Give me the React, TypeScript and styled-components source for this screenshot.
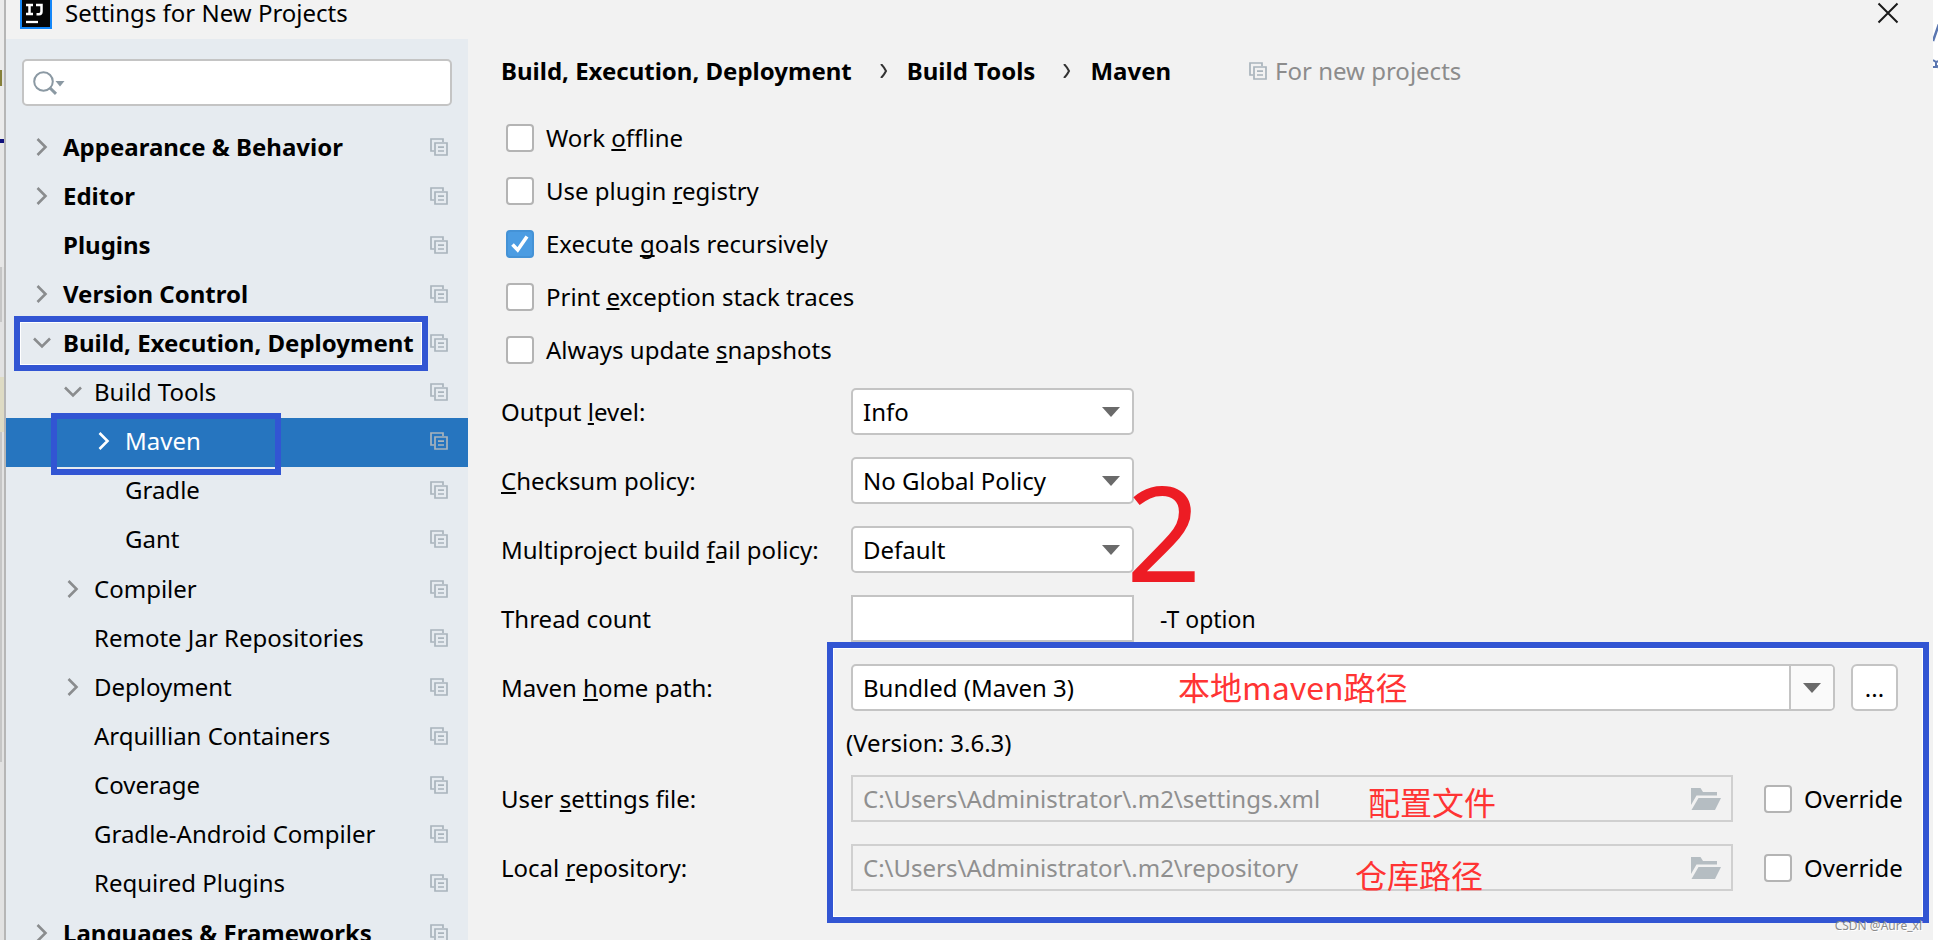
import React, { ReactNode } from "react";
import styled, { createGlobalStyle, css } from "styled-components";

const SANS = `"Noto Sans", "Open Sans", "Noto Sans CJK SC", sans-serif`;
const CJK = `"Noto Sans CJK SC", "Noto Sans", sans-serif`;
const LINE = "#c4c4c4";
const MARK_BLUE = "#3255d3";
const MARK_RED = "#ff3434";

const GlobalStyle = createGlobalStyle`
  *, *::before, *::after { box-sizing: border-box; }
  body {
    margin: 0;
    overflow: hidden;
    background: #f2f2f2;
    color: #000;
    font-family: ${SANS};
    font-size: 24px;
    line-height: 32px;
  }
  button, input, select { font: inherit; color: inherit; margin: 0; }
  svg { display: block; flex: none; }
`;

/* ---------- shell ---------- */

const Page = styled.div`
  display: flex;
  height: 100vh;
  overflow: hidden;
`;

const LeftEdge = styled.div`
  display: flex;
  flex-direction: column;
  width: 6px;
  flex: none;
  border-right: 2px solid #b6b6b6;
  background: #e2e2e2;
`;

const EdgePart = styled.div<{ $h: number; $w?: number; $color: string }>`
  width: ${(p) => p.$w ?? 4}px;
  height: ${(p) => p.$h}px;
  flex: none;
  background: ${(p) => p.$color};
`;

const RightEdge = styled.div`
  width: 5px;
  flex: none;
  padding-top: 24px;
  background: #fff;
  overflow: hidden;
`;

const Dialog = styled.div`
  flex: 1;
  min-width: 0;
  display: flex;
  flex-direction: column;
`;

const TitleBar = styled.header`
  display: flex;
  align-items: center;
  flex: none;
  height: 39px;
  padding: 0 34px 14px 14px;
`;

const Title = styled.h1`
  flex: 1;
  margin: 0 0 0 13px;
  font-size: 24px;
  font-weight: 400;
  line-height: 24px;
`;

const CloseButton = styled.button`
  padding: 0;
  border: 0;
  background: none;
`;

const Body = styled.div`
  flex: 1;
  min-height: 0;
  display: flex;
`;

/* ---------- sidebar ---------- */

const Sidebar = styled.aside`
  width: 462px;
  flex: none;
  padding-top: 20px;
  background: #e6ebf0;
`;

const SearchBox = styled.label`
  display: flex;
  align-items: center;
  gap: 6px;
  height: 47px;
  margin: 0 16px 18px;
  padding: 0 9px;
  border: 2px solid ${LINE};
  border-radius: 5px;
  background: #fff;
`;

const SearchInput = styled.input`
  flex: 1;
  min-width: 0;
  border: 0;
  outline: 0;
  background: none;
`;

const TreeList = styled.ul`
  margin: 0;
  padding: 0;
  list-style: none;
`;

const SubList = styled(TreeList)`
  padding-bottom: 1px;
`;

const TreeItem = styled.li`
  position: relative;
`;

const TreeRow = styled.button<{ $level: number; $selected?: boolean }>`
  display: flex;
  align-items: center;
  width: 100%;
  height: 49px;
  padding: 0 20px 4px ${(p) => 24 + p.$level * 31}px;
  border: 0;
  background: ${(p) => (p.$selected ? "#2675bf" : "none")};
  color: ${(p) => (p.$selected ? "#fff" : "#000")};
  font-weight: ${(p) => (p.$level ? 400 : 700)};
  text-align: left;
  white-space: nowrap;
`;

const ChevronSlot = styled.span`
  display: flex;
  justify-content: center;
  width: 24px;
  margin-right: 9px;
`;

const TreeLabel = styled.span`
  flex: 1;
`;

/* ---------- annotation marks drawn over the dialog ---------- */

const MarkBox = styled.div<{ $top: number; $left: number; $width?: number; $right?: number; $height: number; $halo?: boolean }>`
  position: absolute;
  z-index: 1;
  top: ${(p) => p.$top}px;
  left: ${(p) => p.$left}px;
  ${(p) => (p.$width ? css`width: ${p.$width}px;` : css`right: ${p.$right}px;`)}
  height: ${(p) => p.$height}px;
  border: 6px solid ${MARK_BLUE};
  box-shadow: ${(p) => (p.$halo ? "inset 0 0 0 1px #fff" : "none")};
  pointer-events: none;
`;

const MarkText = styled.span<{ $left: number; $top: number }>`
  position: absolute;
  left: ${(p) => p.$left}px;
  top: ${(p) => p.$top}px;
  color: ${MARK_RED};
  font-family: ${CJK};
  font-size: 32px;
  line-height: 40px;
  white-space: nowrap;
  pointer-events: none;
`;

const MarkNumber = styled.span`
  position: absolute;
  left: 625px;
  top: 77px;
  color: #ed1c24;
  font-size: 132px;
  line-height: 132px;
  pointer-events: none;
`;

const Watermark = styled.div`
  position: absolute;
  right: 11px;
  bottom: 4px;
  z-index: 2;
  color: #8a8a8a;
  font-size: 12px;
  line-height: 20px;
  text-shadow: 1px 1px 0 #fff;
`;

/* ---------- settings panel ---------- */

const Main = styled.main`
  position: relative;
  flex: 1;
  min-width: 0;
  padding-left: 33px;
`;

const Breadcrumb = styled.nav`
  display: flex;
  align-items: center;
  height: 64px;
  white-space: nowrap;
`;

const Crumb = styled.a`
  color: #000;
  font-weight: 700;
  text-decoration: none;
`;

const CrumbArrow = styled.span`
  padding: 0 19px 0 28px;
`;

const Scope = styled.span`
  display: flex;
  align-items: center;
  gap: 8px;
  margin-left: 78px;
  color: #8c8c8c;
`;

const CheckList = styled.div`
  display: flex;
  flex-direction: column;
  padding: 8px 0 12px 5px;
`;

const CheckLabel = styled.label<{ $row: number }>`
  display: flex;
  align-items: center;
  gap: 12px;
  height: ${(p) => p.$row}px;
  white-space: nowrap;
`;

const CheckFrame = styled.span`
  display: grid;
  place-items: center;
  & > * { grid-area: 1 / 1; }
`;

const CheckInput = styled.input`
  appearance: none;
  width: 28px;
  height: 28px;
  border: 2px solid #b4b4b4;
  border-radius: 4px;
  background: #fff;
  &:checked { background: #4b9ce2; border-color: #4492d6; }
`;

const Mnemonic = styled.u`
  text-decoration-thickness: 2px;
  text-underline-offset: 2px;
  text-decoration-skip-ink: none;
`;

const Form = styled.form`
  position: relative;
  display: flex;
  flex-direction: column;
  gap: 22px;
  padding-right: 23px;
`;

const FieldRow = styled.div`
  display: flex;
  align-items: center;
  height: 47px;
`;

const FieldLabel = styled.label`
  width: 350px;
  flex: none;
  white-space: nowrap;
`;

const PathRows = styled.div`
  display: flex;
  flex-direction: column;
`;

const Version = styled.div`
  display: flex;
  align-items: center;
  height: 64px;
  padding-left: 345px;
`;

const SelectFrame = styled.span`
  position: relative;
  width: 283px;
`;

const Select = styled.select`
  appearance: none;
  display: block;
  width: 100%;
  height: 47px;
  padding: 0 40px 0 10px;
  border: 2px solid ${LINE};
  border-radius: 5px;
  background: #fff;
`;

const SelectArrow = styled.span`
  position: absolute;
  top: 19px;
  right: 14px;
  pointer-events: none;
`;

const CountInput = styled.input`
  width: 283px;
  height: 47px;
  padding: 0 10px;
  border: 2px solid ${LINE};
  background: #fff;
`;

const Hint = styled.span`
  margin-left: 26px;
  font-size: 23px;
`;

const PathField = styled.div<{ $disabled?: boolean }>`
  position: relative;
  display: flex;
  align-items: center;
  flex: 1;
  min-width: 0;
  height: 47px;
  border: 2px solid ${(p) => (p.$disabled ? "#d0d0d0" : LINE)};
  border-radius: ${(p) => (p.$disabled ? 0 : 5)}px;
  background: ${(p) => (p.$disabled ? "#f2f2f2" : "#fff")};
  padding-right: ${(p) => (p.$disabled ? 10 : 0)}px;
  overflow: ${(p) => (p.$disabled ? "visible" : "hidden")};
`;

const PathInput = styled.input`
  flex: 1;
  min-width: 0;
  height: 39px;
  padding: 0 10px;
  border: 0;
  outline: 0;
  background: none;
  &:disabled { color: #8f8f8f; }
`;

const DropButton = styled.button`
  display: grid;
  place-items: center;
  align-self: stretch;
  width: 44px;
  padding: 0;
  border: 0;
  border-left: 2px solid ${LINE};
  background: #fafafa;
`;

const BrowseButton = styled.button`
  width: 47px;
  height: 47px;
  margin: 0 12px 0 16px;
  padding: 0;
  border: 2px solid ${LINE};
  border-radius: 6px;
  background: #fff;
`;

const OverrideSlot = styled.div`
  width: 146px;
  margin-left: 31px;
  flex: none;
`;

/* ---------- icons ---------- */

const CopyIcon = () => (
  <svg width="18" height="18" viewBox="0 0 18 18" fill="none" stroke="#a9b4bc" strokeWidth="1.7" aria-hidden>
    <path d="M4 13H1V1h12v3" />
    <path d="M5 5h12v12H5z" />
    <path d="M8 9.2h6M8 13h6" />
  </svg>
);

const ChevronRight = ({ color }: { color: string }) => (
  <svg width="12" height="18" viewBox="0 0 12 18" fill="none" stroke={color} strokeWidth="2.6" aria-hidden>
    <path d="M1.5 1l8 8-8 8" />
  </svg>
);

const ChevronDown = () => (
  <svg width="18" height="12" viewBox="0 0 18 12" fill="none" stroke="#8a8c8e" strokeWidth="2.6" aria-hidden>
    <path d="M1 1.5l8 8 8-8" />
  </svg>
);

const SmallChevron = () => (
  <svg width="8" height="14" viewBox="0 0 8 14" fill="none" stroke="#333" strokeWidth="2" aria-hidden>
    <path d="M1 0c2 2 4 5 5 7-1 2-3 5-5 7" />
  </svg>
);

const ArrowDown = () => (
  <svg width="18" height="10" viewBox="0 0 18 10" aria-hidden>
    <path d="M0 0h18L9 10z" fill="#6a6a6a" />
  </svg>
);

const SearchIcon = () => (
  <svg width="33" height="24" viewBox="0 0 33 24" fill="none" stroke="#8b99a3" aria-hidden>
    <circle cx="10.5" cy="10.5" r="9.3" strokeWidth="2" />
    <path d="M16.5 16.5l6.5 6.3" strokeWidth="3" />
    <path d="M22.5 10h9l-4.5 5.5z" fill="#8b99a3" stroke="none" />
  </svg>
);

const FolderIcon = () => (
  <svg width="30" height="22" viewBox="0 0 30 22" fill="#b5bdc2" aria-hidden>
    <path d="M0 0h9.500l2.500 4h14v3.500H5.500L0 17z" />
    <path d="M7.500 10H30l-6 12H0.500z" />
  </svg>
);

const CheckIcon = () => (
  <svg width="18" height="18" viewBox="0 0 18 18" fill="none" stroke="#fff" strokeWidth="3.6" aria-hidden>
    <path d="M1.500 9.500l5.200 5.500L16 1.500" />
  </svg>
);

const CloseIcon = () => (
  <svg width="22" height="22" viewBox="0 0 22 22" fill="none" stroke="#1a1a1a" strokeWidth="2" aria-hidden>
    <path d="M1.500 1.500l19 19M20.500 1.500l-19 19" />
  </svg>
);

const AppLogo = () => (
  <svg width="32" height="32" viewBox="0 0 32 32" aria-hidden>
    <rect width="32" height="32" fill="#1487f8" />
    <rect x="2" y="2" width="28" height="28" fill="#050505" />
    <path d="M6 8h7M9.500 8v9M6 17h7M16 8h5.500v6.500c0 2-1 2.700-2.500 2.700h-2.500" fill="none" stroke="#fff" strokeWidth="2.5" />
    <path d="M6 25h12" stroke="#fff" strokeWidth="2.3" />
  </svg>
);

const EdgeMarks = () => (
  <svg width="5" height="48" viewBox="0 0 5 48" fill="none" stroke="#5a76b0" strokeWidth="2.5" aria-hidden>
    <path d="M0 17L6 0" />
    <path d="M0 36l3 2v5H0M3 38l3-1M3 41l3 3" strokeWidth="2" />
  </svg>
);

/* ---------- composed parts ---------- */

type NodeProps = {
  label: string;
  level?: number;
  state?: "open" | "closed";
  selected?: boolean;
  mark?: ReactNode;
  children?: ReactNode;
};

const Node = ({ label, level = 0, state, selected, mark, children }: NodeProps) => (
  <TreeItem>
    <TreeRow type="button" $level={level} $selected={selected}>
      <ChevronSlot>
        {state === "open" && <ChevronDown />}
        {state === "closed" && <ChevronRight color={selected ? "#fff" : "#8a8c8e"} />}
      </ChevronSlot>
      <TreeLabel>{label}</TreeLabel>
      <CopyIcon />
    </TreeRow>
    {mark}
    {children && <SubList>{children}</SubList>}
  </TreeItem>
);

const Check = ({ children, checked, row = 53 }: { children: ReactNode; checked?: boolean; row?: number }) => (
  <CheckLabel $row={row}>
    <CheckFrame>
      <CheckInput type="checkbox" defaultChecked={checked} />
      {checked && <CheckIcon />}
    </CheckFrame>
    <span>{children}</span>
  </CheckLabel>
);

const SelectField = ({ id, label, value }: { id: string; label: ReactNode; value: string }) => (
  <FieldRow>
    <FieldLabel htmlFor={id}>{label}</FieldLabel>
    <SelectFrame>
      <Select id={id} defaultValue={value}>
        <option>{value}</option>
      </Select>
      <SelectArrow>
        <ArrowDown />
      </SelectArrow>
    </SelectFrame>
  </FieldRow>
);

const OverrideField = ({ id, label, value, note }: { id: string; label: ReactNode; value: string; note: ReactNode }) => (
  <FieldRow>
    <FieldLabel htmlFor={id}>{label}</FieldLabel>
    <PathField $disabled>
      <PathInput id={id} defaultValue={value} disabled />
      <FolderIcon />
      {note}
    </PathField>
    <OverrideSlot>
      <Check row={47}>Override</Check>
    </OverrideSlot>
  </FieldRow>
);

export default function App() {
  return (
    <Page>
      <GlobalStyle />
      <LeftEdge>
        <EdgePart $h={70} $color="#ebebeb" />
        <EdgePart $h={16} $w={2} $color="#85803a" />
        <EdgePart $h={53} $color="#ebebeb" />
        <EdgePart $h={4} $color="#10107c" />
        <EdgePart $h={124} $color="#e6e6e6" />
        <EdgePart $h={55} $w={2} $color="#c6c6c6" />
        <EdgePart $h={55} $color="#e2e2e2" />
        <EdgePart $h={55} $color="#dedbc4" />
        <EdgePart $h={330} $w={2} $color="#c6c6c6" />
      </LeftEdge>

      <Dialog>
        <TitleBar>
          <AppLogo />
          <Title>Settings for New Projects</Title>
          <CloseButton type="button" aria-label="Close">
            <CloseIcon />
          </CloseButton>
        </TitleBar>

        <Body>
          <Sidebar>
            <SearchBox>
              <SearchIcon />
              <SearchInput type="text" aria-label="Search settings" />
            </SearchBox>
            <TreeList>
              <Node label="Appearance & Behavior" state="closed" />
              <Node label="Editor" state="closed" />
              <Node label="Plugins" />
              <Node label="Version Control" state="closed" />
              <Node
                label="Build, Execution, Deployment"
                state="open"
                mark={<MarkBox $top={-4} $left={8} $width={414} $height={55} $halo />}
              >
                <Node label="Build Tools" level={1} state="open">
                  <Node
                    label="Maven"
                    level={2}
                    state="closed"
                    selected
                    mark={<MarkBox $top={-5} $left={45} $width={230} $height={62} />}
                  />
                  <Node label="Gradle" level={2} />
                  <Node label="Gant" level={2} />
                </Node>
                <Node label="Compiler" level={1} state="closed" />
                <Node label="Remote Jar Repositories" level={1} />
                <Node label="Deployment" level={1} state="closed" />
                <Node label="Arquillian Containers" level={1} />
                <Node label="Coverage" level={1} />
                <Node label="Gradle-Android Compiler" level={1} />
                <Node label="Required Plugins" level={1} />
              </Node>
              <Node label="Languages & Frameworks" state="closed" />
            </TreeList>
          </Sidebar>

          <Main>
            <Breadcrumb>
              <Crumb href="#build">Build, Execution, Deployment</Crumb>
              <CrumbArrow>
                <SmallChevron />
              </CrumbArrow>
              <Crumb href="#tools">Build Tools</Crumb>
              <CrumbArrow>
                <SmallChevron />
              </CrumbArrow>
              <Crumb href="#maven">Maven</Crumb>
              <Scope>
                <CopyIcon />
                For new projects
              </Scope>
            </Breadcrumb>

            <CheckList>
              <Check>
                Work <Mnemonic>o</Mnemonic>ffline
              </Check>
              <Check>
                Use plugin <Mnemonic>r</Mnemonic>egistry
              </Check>
              <Check checked>
                Execute <Mnemonic>g</Mnemonic>oals recursively
              </Check>
              <Check>
                Print <Mnemonic>e</Mnemonic>xception stack traces
              </Check>
              <Check>
                Always update <Mnemonic>s</Mnemonic>napshots
              </Check>
            </CheckList>

            <Form>
              <SelectField id="output" value="Info" label={<>Output <Mnemonic>l</Mnemonic>evel:</>} />
              <SelectField id="checksum" value="No Global Policy" label={<><Mnemonic>C</Mnemonic>hecksum policy:</>} />
              <SelectField id="fail" value="Default" label={<>Multiproject build <Mnemonic>f</Mnemonic>ail policy:</>} />
              <FieldRow>
                <FieldLabel htmlFor="threads">Thread count</FieldLabel>
                <CountInput id="threads" type="text" />
                <Hint>-T option</Hint>
              </FieldRow>

              <PathRows>
                <FieldRow>
                  <FieldLabel htmlFor="home">
                    Maven <Mnemonic>h</Mnemonic>ome path:
                  </FieldLabel>
                  <PathField>
                    <PathInput id="home" type="text" defaultValue="Bundled (Maven 3)" />
                    <DropButton type="button" aria-label="Show paths">
                      <ArrowDown />
                    </DropButton>
                    <MarkText $left={325} $top={0}>本地maven路径</MarkText>
                  </PathField>
                  <BrowseButton type="button">...</BrowseButton>
                </FieldRow>
                <Version>(Version: 3.6.3)</Version>
                <OverrideField
                  id="settings"
                  label={<>User <Mnemonic>s</Mnemonic>ettings file:</>}
                  value="C:\Users\Administrator\.m2\settings.xml"
                  note={<MarkText $left={515} $top={4}>配置文件</MarkText>}
                />
              </PathRows>

              <OverrideField
                id="repository"
                label={<>Local <Mnemonic>r</Mnemonic>epository:</>}
                value="C:\Users\Administrator\.m2\repository"
                note={<MarkText $left={502} $top={8}>仓库路径</MarkText>}
              />

              <MarkBox $top={254} $left={326} $right={4} $height={281} $halo />
              <MarkNumber>2</MarkNumber>
            </Form>

            <Watermark>CSDN @Aure_xl</Watermark>
          </Main>
        </Body>
      </Dialog>

      <RightEdge>
        <EdgeMarks />
      </RightEdge>
    </Page>
  );
}
